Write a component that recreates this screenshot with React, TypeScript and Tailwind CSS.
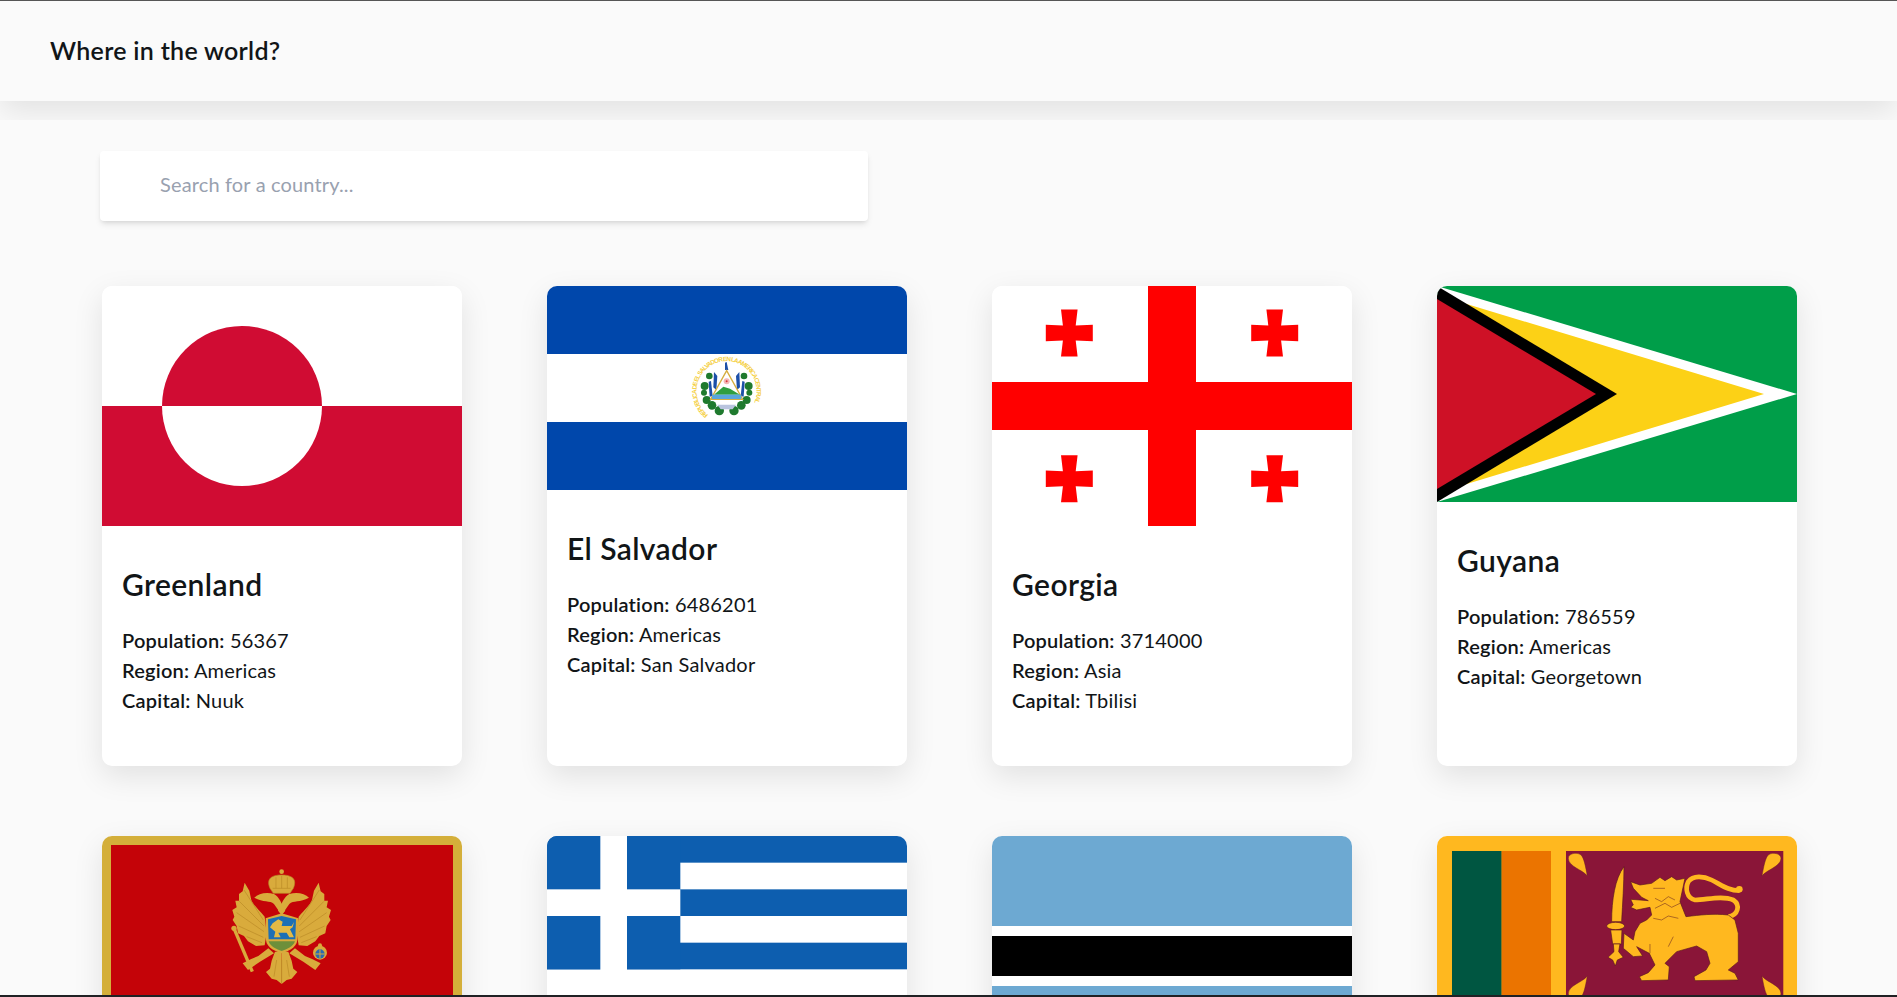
const Cross = ({ x, y }: { x: number; y: number }) => (
  <path
    transform={`translate(${x} ${y})`}
    fill="#ff0000"
    d="M-8.3-23.5H8.3L6.4-7.5 23.5-8.3V8.3L6.4 7.5 8.3 23.5H-8.3L-6.4 7.5-23.5 8.3V-8.3L-6.4-7.5Z"
  />
);

const Greenland = () => (
  <svg viewBox="0 0 360 240" className="block w-full h-[240px]">
    <rect width="360" height="120" fill="#fff" />
    <rect y="120" width="360" height="120" fill="#d00c33" />
    <path d="M60 120a80 80 0 0 1 160 0z" fill="#d00c33" />
    <path d="M60 120a80 80 0 0 0 160 0z" fill="#fff" />
  </svg>
);

const ElSalvador = () => (
  <svg viewBox="0 0 360 204" className="block w-full h-[204px]">
    <rect width="360" height="204" fill="#0047ab" />
    <rect y="68" width="360" height="68" fill="#fff" />
    <g transform="translate(93 54) scale(.3333)">
      <defs>
        <path id="sv-ring" d="M205 225A90 90 0 1 1 318 222" />
      </defs>
      <text fontSize="19" fontWeight="700" fill="#f5cf3f" fontFamily="'Liberation Sans',sans-serif" textLength="400">
        <textPath href="#sv-ring">REPUBLICA DE EL SALVADOR EN LA AMERICA CENTRAL</textPath>
      </text>
      <g fill="#1f7a2e">
        <circle cx="208" cy="108" r="10" />
        <circle cx="194" cy="138" r="12" />
        <circle cx="200" cy="180" r="12" />
        <circle cx="216" cy="196" r="13" />
        <circle cx="238" cy="212" r="14" />
        <circle cx="312" cy="108" r="10" />
        <circle cx="326" cy="138" r="12" />
        <circle cx="320" cy="180" r="12" />
        <circle cx="304" cy="196" r="13" />
        <circle cx="282" cy="212" r="14" />
        <circle cx="192" cy="158" r="9" />
        <circle cx="328" cy="158" r="9" />
      </g>
      <g fill="#1c4fa8">
        <path d="M206 125l7-2 5 45-9 2z" />
        <path d="M222 96l10 12-3 42-9-8z" />
        <path d="M314 125l-7-2-5 45 9 2z" />
        <path d="M298 96l-10 12 3 42 9-8z" />
        <path d="M255 68l5-2 5 24h-10z" />
      </g>
      <path d="M260 92L212 178H308Z" fill="#fff" stroke="#d6ad3f" strokeWidth="4" />
      <circle cx="260" cy="124" r="9" fill="#f4b6b6" />
      <circle cx="260" cy="124" r="3" fill="#d4343a" />
      <path d="M222 164L250 140L270 146L300 164Z" fill="#2f9e3f" />
      <rect x="216" y="164" width="88" height="13" fill="#5aa6dc" />
      <path d="M232 194h56l-10 14h-36z" fill="#b9c4de" />
    </g>
  </svg>
);

const Georgia = () => (
  <svg viewBox="0 0 360 240" className="block w-full h-[240px]">
    <rect width="360" height="240" fill="#fff" />
    <rect x="156" width="48" height="240" fill="#ff0000" />
    <rect y="96" width="360" height="48" fill="#ff0000" />
    <Cross x={77.3} y={47} />
    <Cross x={282.7} y={47} />
    <Cross x={77.3} y={192.7} />
    <Cross x={282.7} y={192.7} />
  </svg>
);

const Guyana = () => (
  <svg viewBox="0 0 360 216" className="block w-full h-[216px]">
    <rect width="360" height="216" fill="#009e49" />
    <path d="M0 0L360 108L0 216Z" fill="#fff" />
    <path d="M0 9L327 108L0 207Z" fill="#fcd116" />
    <path d="M0 0L180 108L0 216Z" fill="#000" />
    <path d="M0 13L159 108L0 203Z" fill="#ce1126" />
  </svg>
);

const EagleHalf = () => (
  <>
    <path d="M524 290C505 268 490 255 484 240L478 212L464 188L458 214L447 222L447 242L436 242L440 262L427 270L433 290L428 300L440 318L444 340L462 348L474 364L498 378L524 376L530 340Z" />
    <path d="M575 285L552 252C540 240 520 248 493 233C505 220 530 215 552 222C568 230 575 252 586 272Z" />
    <path d="M535 385L505 408L482 418L458 430L474 450L510 425L552 400Z" />
    <path d="M575 492L560 480L545 476L528 456L540 446L545 422L555 395H575Z" />
    <path fill="none" stroke="#b98a25" strokeWidth="2" d="M520 300L462 210M522 318L448 244M522 335L440 278M520 352L446 318M516 368L470 350" />
    <path fill="none" stroke="#b98a25" strokeWidth="2" d="M575 420V488M560 420L552 470" />
  </>
);

const Montenegro = () => (
  <svg viewBox="0 0 360 180" className="block w-full h-[180px]">
    <rect width="360" height="180" fill="#d4af3a" />
    <rect x="9" y="9" width="342" height="162" fill="#c40308" />
    <g transform="translate(-12 -16) scale(.3333)">
      <path d="M432 325L487 455" stroke="#d9ab3c" strokeWidth="10" />
      <circle cx="432" cy="325" r="8" fill="#d9ab3c" />
      <g fill="#d9ab3c">
        <EagleHalf />
      </g>
      <g transform="translate(1150 0) scale(-1 1)" fill="#d9ab3c">
        <EagleHalf />
      </g>
      <path d="M540 205C525 170 555 165 575 165C595 165 625 170 610 205L600 220H550Z" fill="#d9ab3c" stroke="#b98a25" strokeWidth="2" />
      <path d="M558 172V205M575 168V205M592 172V205M548 205H602" stroke="#b98a25" strokeWidth="2" />
      <circle cx="575" cy="155" r="7" fill="#d9ab3c" />
      <circle cx="690" cy="398" r="21" fill="#d9ab3c" />
      <circle cx="690" cy="402" r="14" fill="#2a6bb0" />
      <path d="M690 388V416M676 402H704" stroke="#d9ab3c" strokeWidth="3" />
      <circle cx="690" cy="376" r="6" fill="#d9ab3c" />
      <path d="M527 295L575 280L625 295L622 360C620 385 590 395 575 400C560 395 530 385 528 360Z" fill="#d9ab3c" />
      <path d="M534 298L575 288L618 298L616 358H536Z" fill="#1d6fb5" />
      <path d="M536 364H615C610 380 590 388 575 393C560 388 541 380 536 364Z" fill="#6d8f3a" />
      <path d="M548 310L565 298L578 305L575 318L605 318L612 306L608 322L600 328L612 352H598L590 338H565L572 352H552L556 335L540 322Z" fill="#e3b945" />
    </g>
  </svg>
);

const Greece = () => (
  <svg viewBox="0 0 360 240" className="block w-full h-[240px]">
    <rect width="360" height="240" fill="#0d5eaf" />
    <rect y="26.67" width="360" height="26.67" fill="#fff" />
    <rect y="80" width="360" height="26.67" fill="#fff" />
    <rect y="133.33" width="360" height="26.67" fill="#fff" />
    <rect y="186.67" width="360" height="26.67" fill="#fff" />
    <rect width="133.33" height="133.33" fill="#0d5eaf" y="0" />
    <rect y="160" width="360" height="26.67" fill="#0d5eaf" />
    <rect x="53.33" width="26.67" height="160" fill="#fff" />
    <rect y="53.33" width="133.33" height="26.67" fill="#fff" />
    <rect y="160" width="360" height="80" fill="#fff" />
  </svg>
);

const Botswana = () => (
  <svg viewBox="0 0 360 240" className="block w-full h-[240px]">
    <rect width="360" height="240" fill="#6da9d2" />
    <rect y="90" width="360" height="60" fill="#fff" />
    <rect y="100" width="360" height="40" fill="#000" />
  </svg>
);

const Leaf = () => (
  <path d="M502 168C490 150 445 140 445 115C445 100 470 96 482 104C492 112 497 140 502 168Z" fill="#ffb81f" stroke="#6b1a2a" strokeWidth="1.5" />
);

const SriLanka = () => (
  <svg viewBox="0 0 360 180" className="block w-full h-[180px]">
    <rect width="360" height="180" fill="#ffb81f" />
    <g transform="translate(-17 -16) scale(.3333)">
      <rect x="96" y="93" width="149" height="450" fill="#005641" />
      <rect x="245" y="93" width="148" height="450" fill="#eb7400" />
      <rect x="438" y="93" width="652" height="450" fill="#8a1538" />
      <Leaf />
      <g transform="translate(1528 0) scale(-1 1)">
        <Leaf />
      </g>
      <g transform="translate(0 636) scale(1 -1)">
        <Leaf />
      </g>
      <g transform="translate(1528 636) scale(-1 -1)">
        <Leaf />
      </g>
      <g stroke="#5c1620" strokeWidth="2" fill="#ffb81f">
        <path d="M612 140C585 175 575 240 575 305H605C608 250 612 190 612 140Z" />
        <ellipse cx="587" cy="318" rx="27" ry="11" />
        <path d="M572 330H606L604 372H578Z" />
        <path d="M580 372H600L596 395L610 412L592 420L586 438L578 420L564 412L582 395Z" />
        <path fill="none" stroke="#ffb81f" strokeWidth="14" d="M925 290C955 285 962 255 940 240C905 225 860 240 825 240C800 235 795 205 805 185C820 165 850 168 875 180C905 195 925 212 958 212" />
        <circle cx="958" cy="208" r="10" stroke="none" />
        <path d="M795 175L770 180L755 170L735 182L720 172L695 190L660 195L632 185L640 205L665 232L685 242L660 240L632 238L640 255L632 262L650 270L690 262L695 285L680 300L660 310L645 335L640 360L612 340L610 385L640 410L668 408L650 380L688 400L705 435L685 458L658 470L665 482L745 480L748 440L735 430L770 395L830 378L860 395L870 430L858 450L822 470L825 482L955 480L945 460L925 450L955 425L955 340L945 300L925 285C880 280 840 285 798 290L780 245Z" />
        <path fill="none" strokeWidth="1.5" d="M700 205L735 205M705 235L725 245L745 230L765 240M705 265L735 250L755 262L780 250M700 295L725 300L745 288L775 295M690 372V400M760 350L745 380" />
      </g>
    </g>
  </svg>
);

type Country = {
  key: string;
  flag: React.ReactNode;
  info?: { name: string; population: number; region: string; capital: string };
};

const countries: Country[] = [
  { key: "gl", flag: <Greenland />, info: { name: "Greenland", population: 56367, region: "Americas", capital: "Nuuk" } },
  { key: "sv", flag: <ElSalvador />, info: { name: "El Salvador", population: 6486201, region: "Americas", capital: "San Salvador" } },
  { key: "ge", flag: <Georgia />, info: { name: "Georgia", population: 3714000, region: "Asia", capital: "Tbilisi" } },
  { key: "gy", flag: <Guyana />, info: { name: "Guyana", population: 786559, region: "Americas", capital: "Georgetown" } },
  { key: "me", flag: <Montenegro /> },
  { key: "gr", flag: <Greece /> },
  { key: "bw", flag: <Botswana /> },
  { key: "lk", flag: <SriLanka /> },
];

const Row = ({ label, value }: { label: string; value: string | number }) => (
  <p className="text-[20px] leading-[30px] font-normal tracking-[0.2px]">
    <span className="font-semibold">{label}:</span> {value}
  </p>
);

export default function App() {
  return (
    <div className="h-screen flex flex-col overflow-hidden bg-[#fafafa] text-[#111517] font-['Lato',sans-serif]">
      <div className="h-px shrink-0 bg-[#555555]" />
      <div className="flex-1 min-h-0 overflow-hidden flex flex-col">
        <header className="h-[100px] shrink-0 flex items-center px-[50px] bg-[#fafafa] shadow-[0_10px_30px_rgba(0,0,0,0.1)]">
          <h1 className="text-[25px] font-semibold tracking-[0.3px]">Where in the world?</h1>
        </header>
        <main className="relative mt-[19px] pt-[31px] px-[100px] bg-[#fafafa]">
          <input
            type="text"
            placeholder="Search for a country..."
            className="block w-[768px] h-[70px] pl-[60px] pb-[5px] rounded-sm bg-white shadow-md text-[20px] tracking-[0.15px] placeholder:text-gray-400 outline-none"
          />
          <div className="mt-[65px] ml-[2px] grid grid-cols-[repeat(4,360px)] gap-x-[85px] gap-y-[70px]">
            {countries.map((c) => (
              <article key={c.key} className="h-[480px] bg-white rounded-[10px] shadow-[0_10px_30px_rgba(0,0,0,0.1)] overflow-hidden">
                {c.flag}
                {c.info && (
                  <div className="px-5 pt-[40px]">
                    <h2 className="text-[30px] leading-9 font-semibold tracking-[0.4px]">{c.info.name}</h2>
                    <div className="mt-[23px]">
                      <Row label="Population" value={c.info.population} />
                      <Row label="Region" value={c.info.region} />
                      <Row label="Capital" value={c.info.capital} />
                    </div>
                  </div>
                )}
              </article>
            ))}
          </div>
        </main>
      </div>
      <div className="h-[2px] shrink-0 bg-[#202124]" />
    </div>
  );
}
